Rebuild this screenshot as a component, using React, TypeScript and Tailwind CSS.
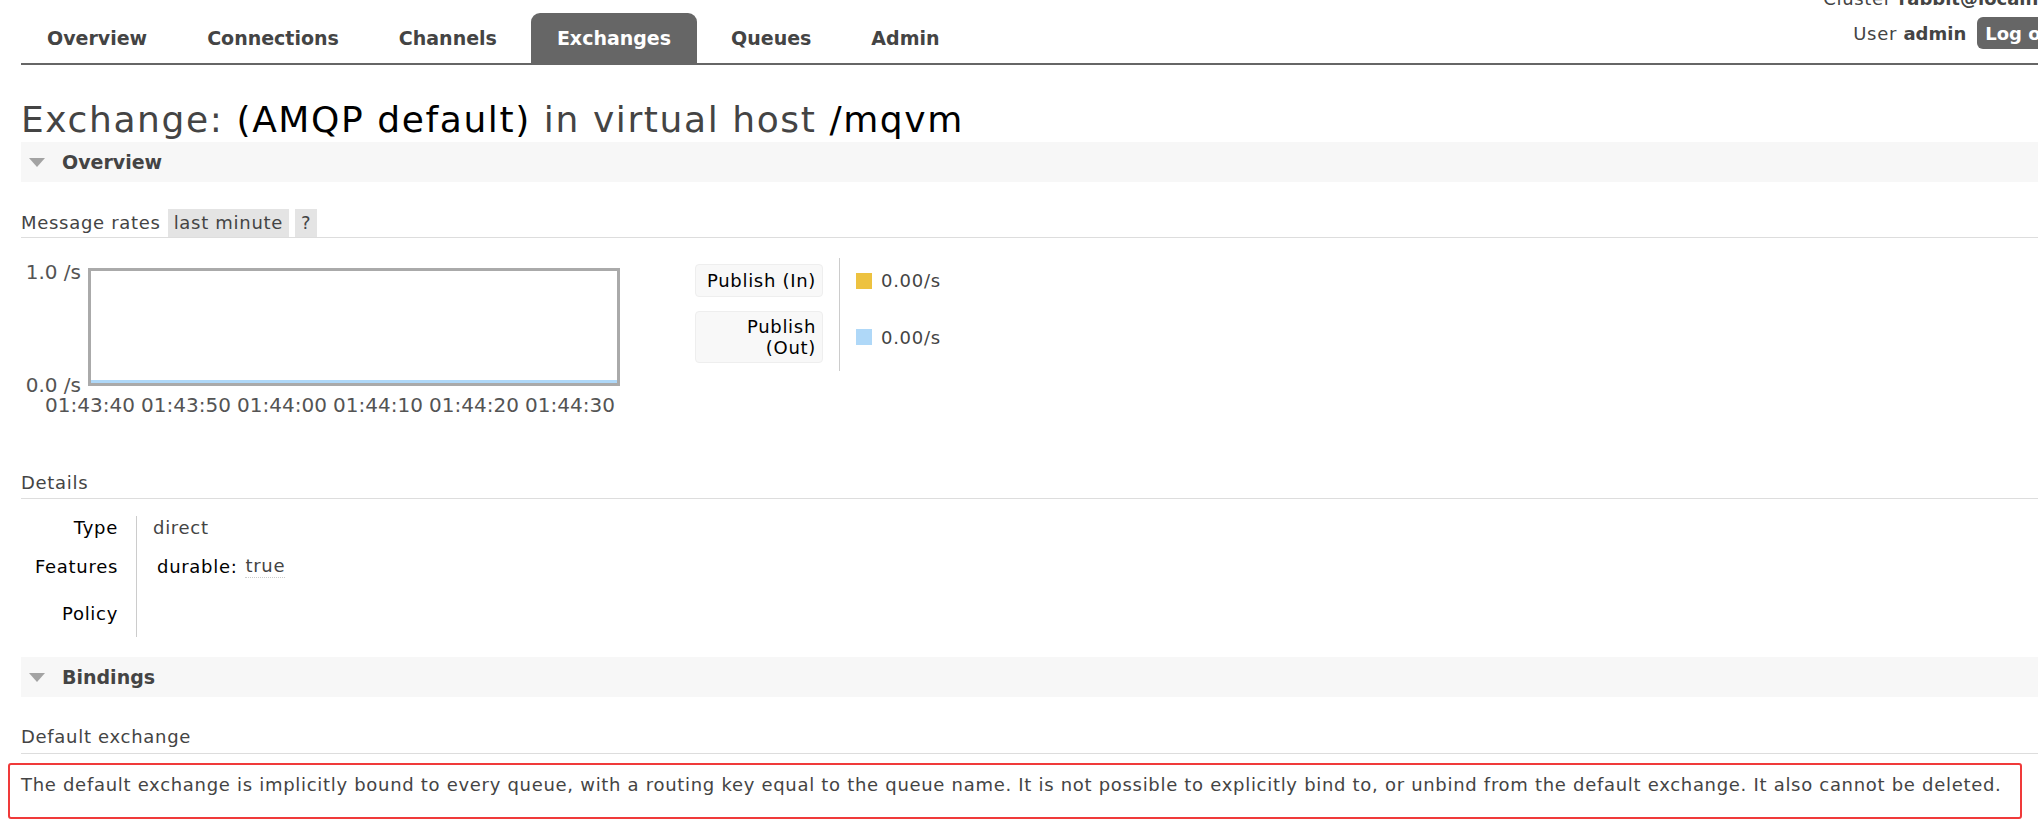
const NAV = ["Overview", "Connections", "Channels", "Exchanges", "Queues", "Admin"];
const TIMES = ["01:43:40", "01:43:50", "01:44:00", "01:44:10", "01:44:20", "01:44:30"];

function SectionHeader({ title }: { title: string }) {
  return (
    <div className="flex h-[40px] items-center bg-[#f7f7f7]">
      <svg width="16" height="9" viewBox="0 0 16 9" className="ml-[8px] mr-[17px]">
        <polygon points="0,0 16,0 8,9" fill="#a3a3a3" />
      </svg>
      <span className="text-[19px] font-bold tracking-normal text-[#444]">{title}</span>
    </div>
  );
}

function Chart() {
  return (
    <div className="pt-[10px] tracking-normal">
      <div className="flex items-start">
        <div className="-mb-[7px] -mt-[4px] mr-[7px] flex h-[129px] w-[60px] flex-col justify-between text-right text-[20px] leading-[16px] text-[#545454]">
          <span>1.0 /s</span>
          <span>0.0 /s</span>
        </div>
        <div className="flex h-[118px] w-[532px] flex-col justify-end border-[3px] border-[#aaa] bg-white">
          <div className="h-[3px] bg-[#afd8f8]" />
        </div>
      </div>
      <div className="ml-[21px] mt-[11px] flex text-[20px] leading-[16px] text-[#545454]">
        {TIMES.map((t) => (
          <span key={t} className="w-[96px] text-center">
            {t}
          </span>
        ))}
      </div>
    </div>
  );
}

function Legend() {
  return (
    <div className="ml-[75px] flex">
      <div className="flex flex-col gap-[14px] pb-[8px] pr-[16px] pt-[6px] text-right text-black">
        <div className="w-[128px] rounded-[4px] border border-[#eee] bg-[#f8f8f8] px-[6px] py-[5px] leading-[21px]">
          Publish (In)
        </div>
        <div className="w-[128px] rounded-[4px] border border-[#eee] bg-[#f8f8f8] px-[6px] py-[4px] leading-[21px]">
          Publish
          <br />
          (Out)
        </div>
      </div>
      <div className="flex flex-col border-l border-[#ccc] pl-[16px] pt-[6px]">
        <div className="flex h-[33px] items-center">
          <span className="mr-[9px] h-[16px] w-[16px] bg-[#edc240]" />
          <span>0.00/s</span>
        </div>
        <div className="mt-[14px] flex h-[52px] items-center">
          <span className="mr-[9px] h-[16px] w-[16px] bg-[#afd8f8]" />
          <span>0.00/s</span>
        </div>
      </div>
    </div>
  );
}

export default function App() {
  return (
    <div className="relative h-[839px] w-full overflow-hidden bg-white font-['DejaVu_Sans',sans-serif] text-[18px] tracking-[0.7px] text-[#444]">
      <div className="absolute right-[-32px] top-[-13px] flex flex-col items-end gap-[6px] whitespace-nowrap">
        <div className="leading-[24px]">
          Cluster <b className="tracking-normal text-[#444]">rabbit@localhost</b>
        </div>
        <div className="flex h-[32px] items-center">
          <span>
            User <b className="tracking-normal">admin</b>
          </span>
          <span className="ml-[11px] flex h-[32px] items-center rounded-[6px] bg-[#666] px-[8px] font-bold tracking-normal text-white">
            Log out
          </span>
        </div>
      </div>

      <div className="pl-[21px]">
        <nav className="flex h-[65px] items-end border-b-2 border-[#666] tracking-normal">
          <ul className="flex gap-[8px]">
            {NAV.map((n) => (
              <li
                key={n}
                className={
                  n === "Exchanges"
                    ? "flex h-[50px] items-center rounded-t-[9px] bg-[#666] px-[26px] text-[19px] font-bold text-white"
                    : "flex h-[50px] items-center px-[26px] text-[19px] font-bold text-[#444]"
                }
              >
                {n}
              </li>
            ))}
          </ul>
        </nav>

        <h1 className="mt-[37px] text-[36px] leading-[36px] tracking-[1.6px] text-[#444]">
          Exchange: <span className="text-black">(AMQP default)</span> in virtual host{" "}
          <span className="text-black">/mqvm</span>
        </h1>

        <div className="mt-[4px]">
          <SectionHeader title="Overview" />
        </div>

        <div className="mt-[27px] flex h-[29px] items-center gap-[6px] border-b border-[#ddd] leading-[28px]">
          <span className="mr-[1px]">Message rates</span>
          <span className="bg-[#e4e4e4] px-[6px]">last minute</span>
          <span className="bg-[#e4e4e4] px-[6px]">?</span>
        </div>

        <div className="mt-[20px] flex items-start">
          <Chart />
          <Legend />
        </div>

        <div className="mt-[58px] border-b border-[#ddd] pb-[3px] leading-[24px]">Details</div>

        <div className="mt-[17px] flex">
          <div className="w-[116px] border-r border-[#ccc] pb-[5px] pr-[18px] text-right text-black">
            <div className="flex h-[22px] items-center justify-end">Type</div>
            <div className="flex h-[56px] items-center justify-end">Features</div>
            <div className="flex h-[38px] items-center justify-end">Policy</div>
          </div>
          <div className="pl-[16px]">
            <div className="flex h-[22px] items-center">direct</div>
            <div className="flex h-[56px] items-center pl-[4px]">
              <span className="text-black">durable:</span>
              <span className="ml-[8px] border-b border-dotted border-[#ccc] leading-[22px]">true</span>
            </div>
            <div className="h-[38px]" />
          </div>
        </div>

        <div className="mt-[20px]">
          <SectionHeader title="Bindings" />
        </div>

        <div className="mt-[28px] border-b border-[#ddd] pb-[4px] leading-[24px]">Default exchange</div>

        <div className="-ml-[13px] mt-[9px] h-[56px] w-[2014px] rounded-[3px] border-2 border-[#f03a3a] pl-[11px] pt-[8px] leading-[24px]">
          The default exchange is implicitly bound to every queue, with a routing key equal to the queue name. It is
          not possible to explicitly bind to, or unbind from the default exchange. It also cannot be deleted.
        </div>
      </div>
    </div>
  );
}
